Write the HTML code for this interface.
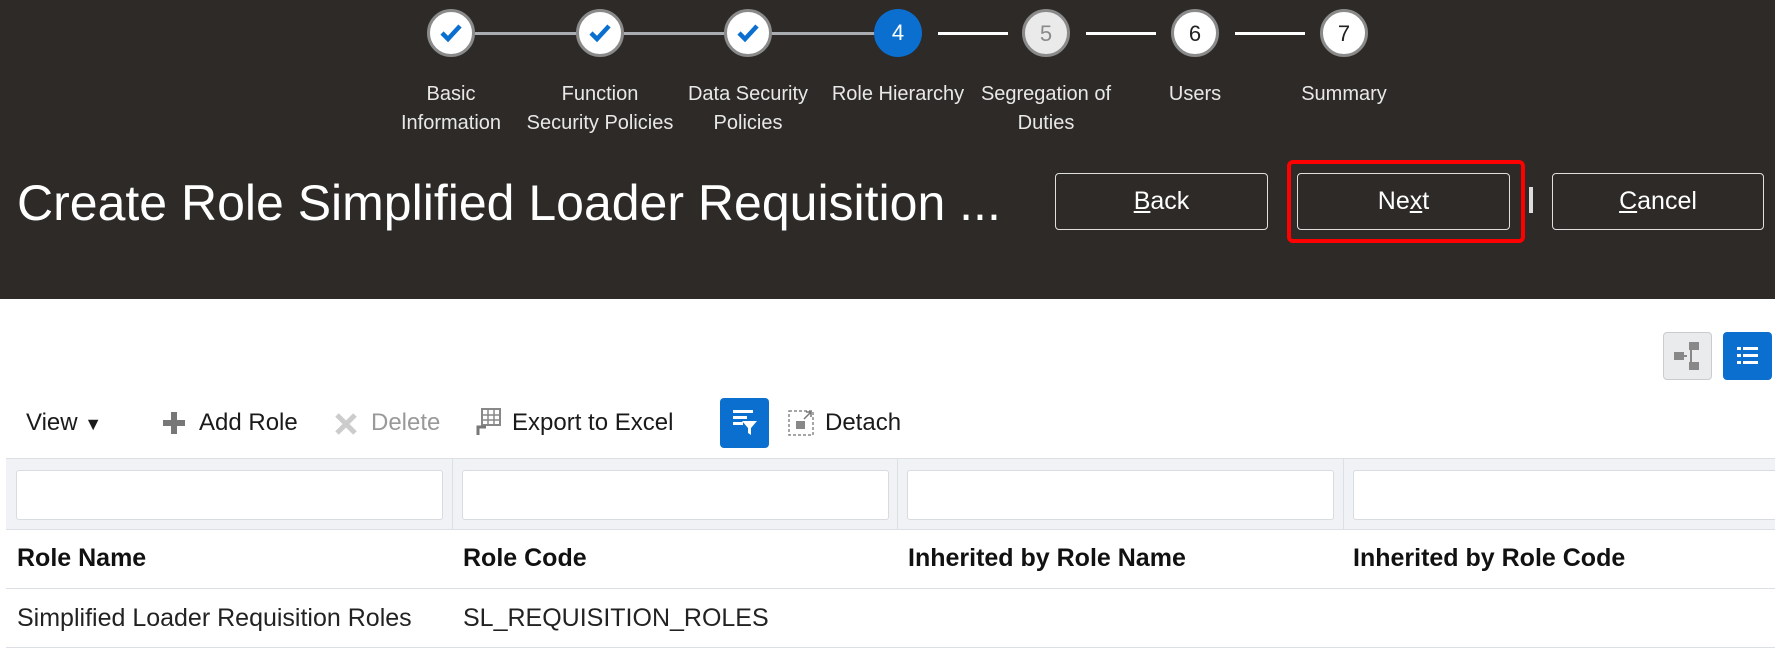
<!DOCTYPE html>
<html><head><meta charset="utf-8"><style>
*{box-sizing:border-box;margin:0;padding:0}
body{width:1775px;height:652px;overflow:hidden;background:#fff;font-family:"Liberation Sans",sans-serif;position:relative}
.hdr{position:absolute;left:0;top:0;width:1775px;height:299px;background:#2d2a27}
.line{position:absolute;height:3px;top:32px}
.c{position:absolute;top:9px;width:48px;height:48px;border-radius:50%;text-align:center;line-height:44px;font-size:22px}
.ck{background:#fff;border:3px solid #8a8a8a}
.lbl{position:absolute;top:80px;color:#e8e8e8;font-size:20px;line-height:29px;text-align:center;width:170px;font-weight:300}
.btn{position:absolute;top:173px;height:57px;border:1px solid #e0e0e0;border-radius:4px;color:#fff;font-size:25px;text-align:center;line-height:55px}
.tb{position:absolute;top:409px;font-size:24px;color:#1a1a1a}
.inp{position:absolute;top:470px;height:50px;background:#fff;border:1px solid #d8dbdf;border-radius:3px}
.th{position:absolute;top:544px;font-weight:bold;font-size:25px;color:#111}
.td{position:absolute;top:604px;font-size:25px;color:#222}
</style></head><body>
<div class="hdr">
 <div class="line" style="left:475px;width:850px;background:#a9adb2"></div>
 <div class="line" style="left:915px;width:430px;background:#2d2a27"></div>
 <div class="line" style="left:938px;width:70px;background:#fff"></div>
 <div class="line" style="left:1086px;width:70px;background:#fff"></div>
 <div class="line" style="left:1235px;width:70px;background:#fff"></div>
 <div class="c ck" style="left:427px"><svg width="42" height="42" viewBox="0 0 42 42"><path d="M12 21l6 6 12-13" stroke="#0b6fd0" stroke-width="4.5" fill="none"/></svg></div>
 <div class="c ck" style="left:576px"><svg width="42" height="42" viewBox="0 0 42 42"><path d="M12 21l6 6 12-13" stroke="#0b6fd0" stroke-width="4.5" fill="none"/></svg></div>
 <div class="c ck" style="left:724px"><svg width="42" height="42" viewBox="0 0 42 42"><path d="M12 21l6 6 12-13" stroke="#0b6fd0" stroke-width="4.5" fill="none"/></svg></div>
 <div class="c" style="left:874px;background:#0b6fd0;color:#fff;line-height:48px">4</div>
 <div class="c" style="left:1022px;background:#eaeaea;border:3px solid #8a8a8a;color:#8a8a8a">5</div>
 <div class="c" style="left:1171px;background:#fff;border:3px solid #8a8a8a;color:#222">6</div>
 <div class="c" style="left:1320px;background:#fff;border:3px solid #8a8a8a;color:#222">7</div>
 <div class="lbl" style="left:366px">Basic<br>Information</div>
 <div class="lbl" style="left:515px">Function<br>Security Policies</div>
 <div class="lbl" style="left:663px">Data Security<br>Policies</div>
 <div class="lbl" style="left:813px">Role Hierarchy</div>
 <div class="lbl" style="left:961px">Segregation of<br>Duties</div>
 <div class="lbl" style="left:1110px">Users</div>
 <div class="lbl" style="left:1259px">Summary</div>
 <div style="position:absolute;left:17px;top:174px;font-size:50px;color:#fff;font-weight:300;white-space:nowrap">Create Role Simplified Loader Requisition ...</div>
 <div class="btn" style="left:1055px;width:213px"><u>B</u>ack</div>
 <div class="btn" style="left:1297px;width:213px">Ne<u>x</u>t</div>
 <div style="position:absolute;left:1287px;top:160px;width:238px;height:83px;border:4px solid #f00;border-radius:6px"></div>
 <div style="position:absolute;left:1529px;top:187px;width:4px;height:26px;background:#ddd"></div>
 <div class="btn" style="left:1552px;width:212px"><u>C</u>ancel</div>
</div>
<div style="position:absolute;left:1663px;top:332px;width:49px;height:48px;background:#e9ebed;border:1px solid #ccc;border-radius:4px">
<svg width="47" height="46"><rect x="25" y="9" width="10" height="8" fill="#888"/><rect x="10" y="19" width="10" height="8" fill="#888"/><rect x="25" y="29" width="10" height="8" fill="#888"/><path d="M20 23h3M27 17v12" stroke="#888" stroke-width="2"/></svg></div>
<div style="position:absolute;left:1723px;top:332px;width:49px;height:48px;background:#0b6fd0;border-radius:4px">
<svg width="49" height="48"><g fill="#fff"><rect x="14" y="15" width="4" height="3"/><rect x="20" y="15" width="15" height="3"/><rect x="14" y="22" width="4" height="3"/><rect x="20" y="22" width="15" height="3"/><rect x="14" y="29" width="4" height="3"/><rect x="20" y="29" width="15" height="3"/></g></svg></div>
<div class="tb" style="left:26px">View <span style="font-size:18px">▼</span></div>
<svg style="position:absolute;left:161px;top:410px" width="26" height="26"><path d="M13 2v22M2 13h22" stroke="#777" stroke-width="6"/></svg>
<div class="tb" style="left:199px">Add Role</div>
<svg style="position:absolute;left:333px;top:411px" width="26" height="26"><path d="M4 4l18 18M22 4L4 22" stroke="#ccc" stroke-width="5"/></svg>
<div class="tb" style="left:371px;color:#999">Delete</div>
<svg style="position:absolute;left:474px;top:407px" width="28" height="30"><rect x="8" y="2" width="18" height="16" fill="none" stroke="#888" stroke-width="2"/><path d="M8 8h18M8 13h18M14 2v16M20 2v16" stroke="#888" stroke-width="1.5"/><path d="M4 28v-8h8" stroke="#777" stroke-width="3" fill="none"/></svg>
<div class="tb" style="left:512px">Export to Excel</div>
<div style="position:absolute;left:720px;top:398px;width:49px;height:50px;background:#0b6fd0;border-radius:4px">
<svg width="49" height="50"><g fill="#fff"><rect x="13" y="12" width="20" height="3"/><rect x="13" y="18" width="14" height="3"/><rect x="13" y="24" width="10" height="3"/><path d="M22 23h15l-6 7v7l-3-2v-5z"/></g></svg></div>
<svg style="position:absolute;left:787px;top:409px" width="28" height="28"><rect x="2" y="2" width="24" height="24" fill="none" stroke="#888" stroke-width="1.5" stroke-dasharray="3 2"/><rect x="9" y="12" width="9" height="8" fill="#888"/><path d="M17 10l7-7M19 3h5v5" stroke="#777" stroke-width="1.5" fill="none"/></svg>
<div class="tb" style="left:825px">Detach</div>
<div style="position:absolute;left:6px;top:458px;width:1769px;height:72px;background:#f0f2f5;border-top:1px solid #dcdfe3;border-bottom:1px solid #dcdfe3"></div>
<div style="position:absolute;left:452px;top:458px;width:1px;height:72px;background:#dcdfe3"></div>
<div style="position:absolute;left:897px;top:458px;width:1px;height:72px;background:#dcdfe3"></div>
<div style="position:absolute;left:1343px;top:458px;width:1px;height:72px;background:#dcdfe3"></div>
<div class="inp" style="left:16px;width:427px"></div>
<div class="inp" style="left:462px;width:427px"></div>
<div class="inp" style="left:907px;width:427px"></div>
<div class="inp" style="left:1353px;width:430px"></div>
<div style="position:absolute;left:6px;top:588px;width:1769px;height:1px;background:#dcdfe3"></div>
<div style="position:absolute;left:6px;top:647px;width:1769px;height:1px;background:#dcdfe3"></div>
<div class="th" style="left:17px">Role Name</div>
<div class="th" style="left:463px">Role Code</div>
<div class="th" style="left:908px">Inherited by Role Name</div>
<div class="th" style="left:1353px">Inherited by Role Code</div>
<div class="td" style="left:17px">Simplified Loader Requisition Roles</div>
<div class="td" style="left:463px">SL_REQUISITION_ROLES</div>
</body></html>
